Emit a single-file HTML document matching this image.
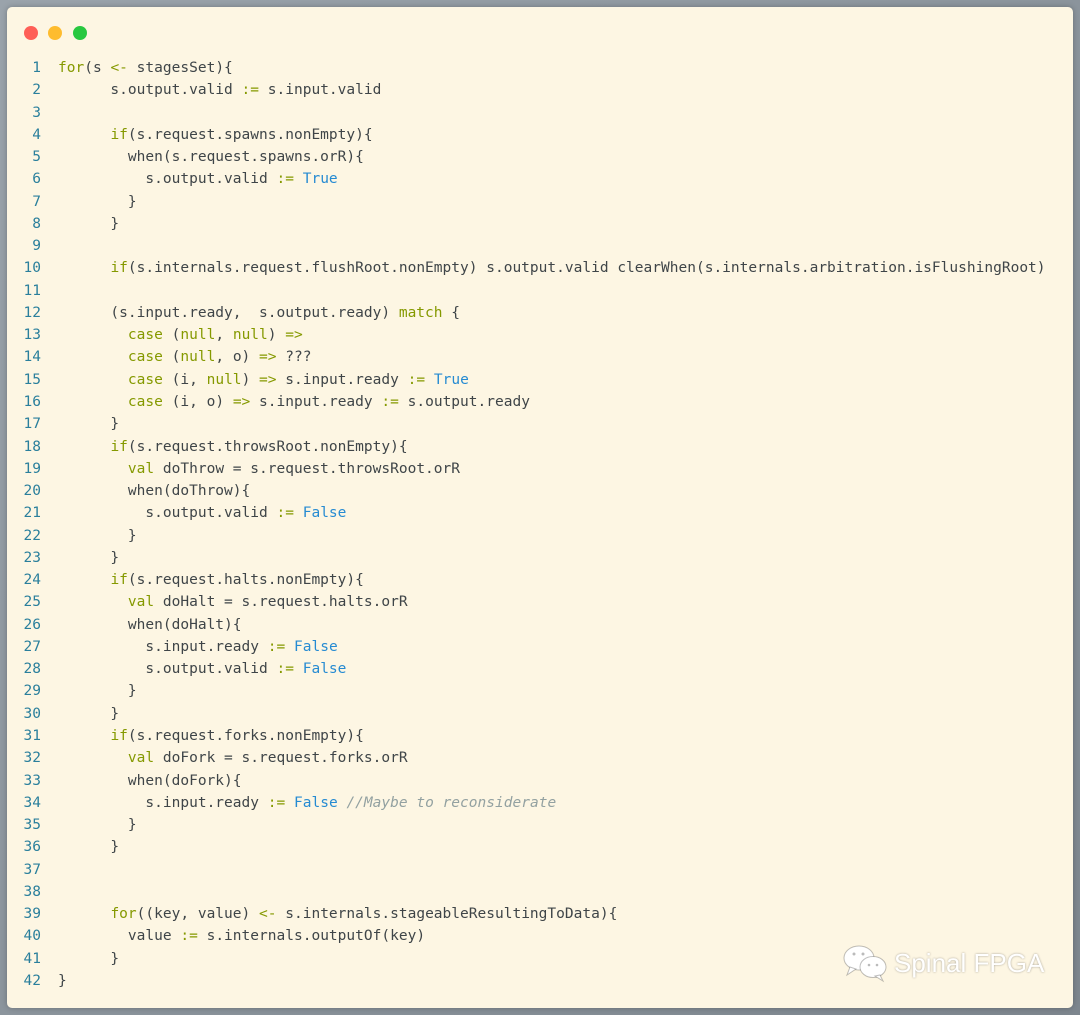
<!DOCTYPE html>
<html><head><meta charset="utf-8"><style>
html,body{margin:0;padding:0;}
body{width:1080px;height:1015px;background:linear-gradient(135deg,#9aa3ab,#7d868e);position:relative;overflow:hidden;font-family:"DejaVu Sans Mono","Liberation Mono",monospace;}
.card{position:absolute;left:7px;top:7px;width:1066px;height:1001px;background:#fdf6e3;border-radius:5px;box-shadow:0 0 6px rgba(0,0,0,.25);}
.dot{position:absolute;top:26px;width:14px;height:14px;border-radius:50%;}
pre{position:absolute;left:0;top:57px;margin:0;font-family:inherit;font-size:14.52px;line-height:22.27px;color:#3f4548;white-space:pre;}
.n{display:inline-block;width:41px;text-align:right;color:#2a7f9c;margin-right:17px;}
.k{color:#859900}.b{color:#268bd2}.c{color:#93a1a1;font-style:italic}
.wm{position:absolute;color:#fff;font-family:"Liberation Sans",sans-serif;font-size:26px;text-shadow:0 0 2px rgba(0,0,0,.35);}
</style></head><body>
<div class="card"></div>
<div class="dot" style="left:24px;background:#fe5f57"></div>
<div class="dot" style="left:48px;background:#febc2e"></div>
<div class="dot" style="left:73px;background:#28c840"></div>
<pre><span class="n">1</span><span class="k">for</span>(s <span class="k">&lt;-</span> stagesSet){
<span class="n">2</span>      s.output.valid <span class="k">:=</span> s.input.valid
<span class="n">3</span>
<span class="n">4</span>      <span class="k">if</span>(s.request.spawns.nonEmpty){
<span class="n">5</span>        when(s.request.spawns.orR){
<span class="n">6</span>          s.output.valid <span class="k">:=</span> <span class="b">True</span>
<span class="n">7</span>        }
<span class="n">8</span>      }
<span class="n">9</span>
<span class="n">10</span>      <span class="k">if</span>(s.internals.request.flushRoot.nonEmpty) s.output.valid clearWhen(s.internals.arbitration.isFlushingRoot)
<span class="n">11</span>
<span class="n">12</span>      (s.input.ready,  s.output.ready) <span class="k">match</span> {
<span class="n">13</span>        <span class="k">case</span> (<span class="k">null</span>, <span class="k">null</span>) <span class="k">=&gt;</span>
<span class="n">14</span>        <span class="k">case</span> (<span class="k">null</span>, o) <span class="k">=&gt;</span> ???
<span class="n">15</span>        <span class="k">case</span> (i, <span class="k">null</span>) <span class="k">=&gt;</span> s.input.ready <span class="k">:=</span> <span class="b">True</span>
<span class="n">16</span>        <span class="k">case</span> (i, o) <span class="k">=&gt;</span> s.input.ready <span class="k">:=</span> s.output.ready
<span class="n">17</span>      }
<span class="n">18</span>      <span class="k">if</span>(s.request.throwsRoot.nonEmpty){
<span class="n">19</span>        <span class="k">val</span> doThrow = s.request.throwsRoot.orR
<span class="n">20</span>        when(doThrow){
<span class="n">21</span>          s.output.valid <span class="k">:=</span> <span class="b">False</span>
<span class="n">22</span>        }
<span class="n">23</span>      }
<span class="n">24</span>      <span class="k">if</span>(s.request.halts.nonEmpty){
<span class="n">25</span>        <span class="k">val</span> doHalt = s.request.halts.orR
<span class="n">26</span>        when(doHalt){
<span class="n">27</span>          s.input.ready <span class="k">:=</span> <span class="b">False</span>
<span class="n">28</span>          s.output.valid <span class="k">:=</span> <span class="b">False</span>
<span class="n">29</span>        }
<span class="n">30</span>      }
<span class="n">31</span>      <span class="k">if</span>(s.request.forks.nonEmpty){
<span class="n">32</span>        <span class="k">val</span> doFork = s.request.forks.orR
<span class="n">33</span>        when(doFork){
<span class="n">34</span>          s.input.ready <span class="k">:=</span> <span class="b">False</span> <span class="c">//Maybe to reconsiderate</span>
<span class="n">35</span>        }
<span class="n">36</span>      }
<span class="n">37</span>
<span class="n">38</span>
<span class="n">39</span>      <span class="k">for</span>((key, value) <span class="k">&lt;-</span> s.internals.stageableResultingToData){
<span class="n">40</span>        value <span class="k">:=</span> s.internals.outputOf(key)
<span class="n">41</span>      }
<span class="n">42</span>}</pre>
<svg style="position:absolute;left:842px;top:943px" width="48" height="40" viewBox="0 0 48 40">
<g fill="#fff" stroke="rgba(0,0,0,.25)" stroke-width="1">
<ellipse cx="17" cy="15" rx="15" ry="12"/><path d="M8 24 L5 32 L14 26Z"/>
<ellipse cx="31" cy="24" rx="13" ry="10.5"/><path d="M38 32 L41 38 L33 33Z"/>
</g>
<g fill="#bbb"><circle cx="12" cy="11" r="1.5"/><circle cx="21" cy="11" r="1.5"/><circle cx="27" cy="22" r="1.3"/><circle cx="35" cy="22" r="1.3"/></g>
</svg>
<div class="wm" style="left:894px;top:948px">Spinal FPGA</div>
</body></html>
